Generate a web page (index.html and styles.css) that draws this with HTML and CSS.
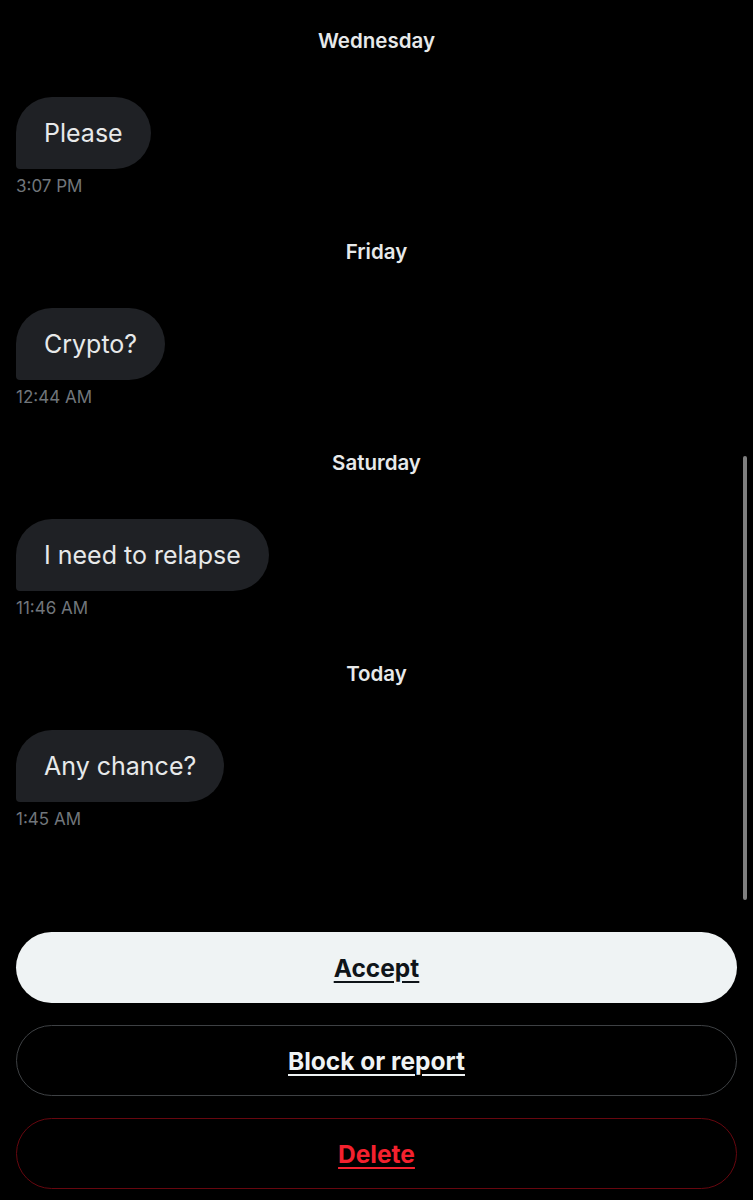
FILE: index.html
```html
<!DOCTYPE html>
<html lang="en">
<head>
    <meta charset="UTF-8">
    <title>Message request</title>
    <link rel="stylesheet" href="styles.css">
</head>
<body>

<div class="thread">
    <div class="day">Wednesday</div>
    <div class="msg">
        <div class="bubble">Please</div>
        <div class="time">3:07 PM</div>
    </div>

    <div class="day">Friday</div>
    <div class="msg">
        <div class="bubble">Crypto?</div>
        <div class="time">12:44 AM</div>
    </div>

    <div class="day">Saturday</div>
    <div class="msg">
        <div class="bubble">I need to relapse</div>
        <div class="time">11:46 AM</div>
    </div>

    <div class="day">Today</div>
    <div class="msg">
        <div class="bubble">Any chance?</div>
        <div class="time">1:45 AM</div>
    </div>
</div>

<div class="scrollbar"></div>

<div class="actions">
    <button class="btn btn-accept">Accept</button>
    <button class="btn btn-block">Block or report</button>
    <button class="btn btn-delete">Delete</button>
</div>

</body>
</html>
```

FILE: styles.css
```css
* {
    box-sizing: border-box;
}

body {
    margin: 0;
    background-color: #000;
    color: #e7e9ea;
    font-family: 'Inter', 'Noto Sans', sans-serif;
    height: 1200px;
    overflow: hidden;
    position: relative;
}

.thread {
    padding: 29px 16px 0;
}

.day {
    text-align: center;
    font-size: 20.5px;
    font-weight: 600;
    line-height: 24px;
    margin-top: 44px;
}

.day:first-child {
    margin-top: 0;
}

.msg {
    margin-top: 44px;
    display: flex;
    flex-direction: column;
    align-items: flex-start;
}

.bubble {
    background-color: #1f2125;
    color: #e7e9ea;
    font-size: 25px;
    line-height: 32px;
    padding: 20px 28px;
    border-radius: 36px 36px 36px 4px;
}

.time {
    margin-top: 7px;
    font-size: 17px;
    line-height: 20px;
    color: #71767b;
}

.scrollbar {
    position: absolute;
    top: 456px;
    right: 6px;
    width: 4px;
    height: 444px;
    border-radius: 2px;
    background-color: #7f7f7f;
}

.actions {
    margin-top: 103px;
    padding: 0 16px;
    display: flex;
    flex-direction: column;
    gap: 22px;
}

.btn {
    height: 71px;
    border-radius: 36px;
    font-family: 'Inter', 'Liberation Sans', sans-serif;
    font-size: 24.5px;
    font-weight: 700;
    text-decoration: underline;
    text-underline-offset: 4px;
    text-decoration-thickness: 2px;
    cursor: pointer;
    background: transparent;
}

.btn-accept {
    background-color: #eff3f4;
    color: #0f1419;
    border: none;
}

.btn-block {
    color: #eff3f4;
    border: 1.5px solid #3e4144;
}

.btn-delete {
    color: #f4212e;
    border: 1.5px solid #67070f;
}
```
